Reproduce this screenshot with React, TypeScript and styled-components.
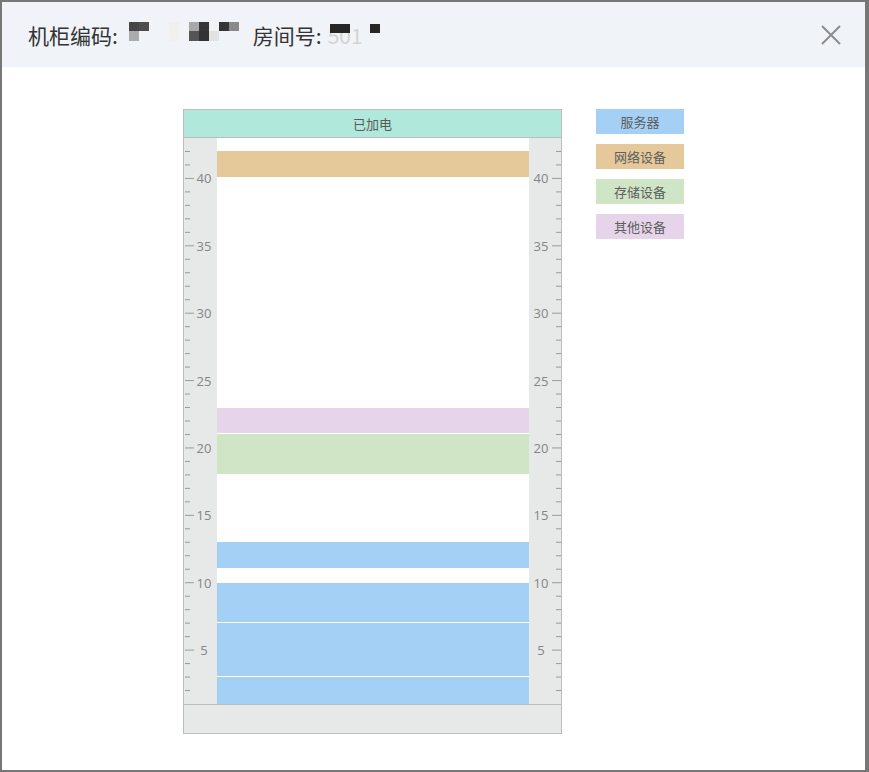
import React from "react";
import styled, { createGlobalStyle } from "styled-components";

const GlobalStyle = createGlobalStyle`
  html, body { margin: 0; padding: 0; background: #ffffff; }
  body { font-family: "Noto Sans CJK SC", "Noto Sans", sans-serif; }
  * { box-sizing: border-box; }
`;

const TOTAL_U = 42;
const BODY_H = 566;
const U = BODY_H / TOTAL_U;

const Frame = styled.div`
  width: 869px;
  height: 772px;
  border: 2px solid #777777;
  border-right-width: 4px;
  display: flex;
  flex-direction: column;
  background: #ffffff;
`;

const Header = styled.div`
  height: 65px;
  flex: none;
  background: #f0f4f9;
  display: flex;
  align-items: center;
  justify-content: space-between;
  padding: 0 22px 0 26px;
`;

const Title = styled.div`
  font-size: 21px;
  color: #333333;
  display: flex;
  align-items: center;
  line-height: 1;
  margin-top: 1px;
`;

const Label = styled.span<{ $gap?: number }>`
  margin-right: ${(p) => p.$gap ?? 0}px;
`;

const Mosaic = styled.span<{ $cols: number }>`
  display: inline-grid;
  grid-template-columns: repeat(${(p) => p.$cols}, 10px);
  grid-auto-rows: 9.5px;
  margin-top: -8px;
  margin-right: 4px;
`;

const Cell = styled.span<{ $c: string }>`
  background: ${(p) => p.$c};
`;

const Masked = styled.span`
  position: relative;
  color: #d3d3d3;
`;

const MaskBlock = styled.span<{ $l: number; $w: number }>`
  position: absolute;
  left: ${(p) => p.$l}px;
  top: -1px;
  width: ${(p) => p.$w}px;
  height: 9px;
  background: #262626;
`;

const CloseBtn = styled.button`
  width: 24px;
  height: 24px;
  border: none;
  background: transparent;
  padding: 0;
  display: flex;
  align-items: center;
  justify-content: center;
  cursor: pointer;
`;

const Content = styled.div`
  flex: 1;
  display: flex;
  justify-content: center;
  align-items: flex-start;
  gap: 34px;
  padding-top: 42px;
`;

const Rack = styled.div`
  width: 379px;
  border: 1px solid #bdbdbd;
  display: flex;
  flex-direction: column;
`;

const RackTop = styled.div`
  height: 28px;
  background: #b0e8dc;
  border-bottom: 1px solid #bdbdbd;
  display: flex;
  align-items: center;
  justify-content: center;
  font-size: 13px;
  color: #5a5a5a;
`;

const RackBody = styled.div`
  height: ${BODY_H}px;
  display: grid;
  grid-template-columns: 33px 312px 32px;
`;

const Rail = styled.div`
  background: #e7e8e8;
`;

const Slots = styled.div`
  display: flex;
  flex-direction: column;
  background: #ffffff;
`;

const Slot = styled.div<{ $u: number; $bg?: string }>`
  height: ${(p) => p.$u * U}px;
  flex: none;
  background: ${(p) => p.$bg ?? "transparent"};
  border-bottom: ${(p) => (p.$bg ? "1px solid #ffffff" : "none")};
  &:last-child {
    border-bottom: none;
  }
`;

const RackFooter = styled.div`
  height: 29px;
  background: #e7e8e8;
  border-top: 1px solid #bdbdbd;
`;

const Legend = styled.div`
  display: flex;
  flex-direction: column;
  gap: 10px;
`;

const LegendItem = styled.div<{ $bg: string }>`
  width: 88px;
  height: 25px;
  background: ${(p) => p.$bg};
  display: flex;
  align-items: center;
  justify-content: center;
  font-size: 13px;
  color: #5e5e5e;
`;

const COLORS = {
  server: "#a5d0f6",
  network: "#e6c99a",
  storage: "#cfe5c6",
  other: "#e6d5ea",
};

const layout: { u: number; bg?: string }[] = [
  { u: 1 },
  { u: 2, bg: COLORS.network },
  { u: 17 },
  { u: 2, bg: COLORS.other },
  { u: 3, bg: COLORS.storage },
  { u: 5 },
  { u: 2, bg: COLORS.server },
  { u: 1 },
  { u: 3, bg: COLORS.server },
  { u: 4, bg: COLORS.server },
  { u: 2, bg: COLORS.server },
];

const Ruler: React.FC<{ side: "left" | "right" }> = ({ side }) => {
  const w = side === "left" ? 33 : 32;
  const items: React.ReactNode[] = [];
  for (let k = 1; k < TOTAL_U; k++) {
    const y = k * U;
    const n = 43 - k;
    const major = n % 5 === 0;
    const len = major ? 9 : 5;
    const x1 = side === "left" ? 1 : w - len;
    const x2 = side === "left" ? 1 + len : w;
    items.push(
      <line key={"t" + k} x1={x1} x2={x2} y1={y} y2={y} stroke="#9a9a9a" strokeWidth={1} />
    );
    if (major) {
      items.push(
        <text
          key={"l" + k}
          x={side === "left" ? 20 : 12}
          y={y}
          textAnchor="middle"
          dominantBaseline="central"
          fontSize={13}
          fill="#858585"
          fontFamily="'Open Sans', 'Noto Sans', sans-serif"
        >
          {n}
        </text>
      );
    }
  }
  return (
    <svg width={w} height={BODY_H} style={{ display: "block" }}>
      {items}
    </svg>
  );
};

const mosaic1 = [
  "#454545", "#4d4d4d", "", "", "#efefef", "", "#a8a8a8", "#363636", "", "#353535", "#8a8a8a", "",
  "#ababab", "", "", "", "#f0f0f0", "", "#555555", "#333333", "#e2e2e2", "", "", "",
];

export default function App() {
  return (
    <>
      <GlobalStyle />
      <Frame>
        <Header>
          <Title>
            <Label $gap={11}>机柜编码:</Label>
            <Mosaic $cols={12}>
              {mosaic1.map((c, i) => (
                <Cell key={i} $c={c || "transparent"} />
              ))}
            </Mosaic>
            <Label $gap={6}>房间号:</Label>
            <Masked>
              501
              <MaskBlock $l={2} $w={20} />
              <MaskBlock $l={42} $w={10} />
            </Masked>
          </Title>
          <CloseBtn aria-label="close">
            <svg width="20" height="20" viewBox="0 0 20 20">
              <path d="M1 1 L19 19 M19 1 L1 19" stroke="#8c8c8c" strokeWidth="2" fill="none" />
            </svg>
          </CloseBtn>
        </Header>
        <Content>
          <Rack>
            <RackTop>已加电</RackTop>
            <RackBody>
              <Rail>
                <Ruler side="left" />
              </Rail>
              <Slots>
                {layout.map((s, i) => (
                  <Slot key={i} $u={s.u} $bg={s.bg} />
                ))}
              </Slots>
              <Rail>
                <Ruler side="right" />
              </Rail>
            </RackBody>
            <RackFooter />
          </Rack>
          <Legend>
            <LegendItem $bg={COLORS.server}>服务器</LegendItem>
            <LegendItem $bg={COLORS.network}>网络设备</LegendItem>
            <LegendItem $bg={COLORS.storage}>存储设备</LegendItem>
            <LegendItem $bg={COLORS.other}>其他设备</LegendItem>
          </Legend>
        </Content>
      </Frame>
    </>
  );
}
